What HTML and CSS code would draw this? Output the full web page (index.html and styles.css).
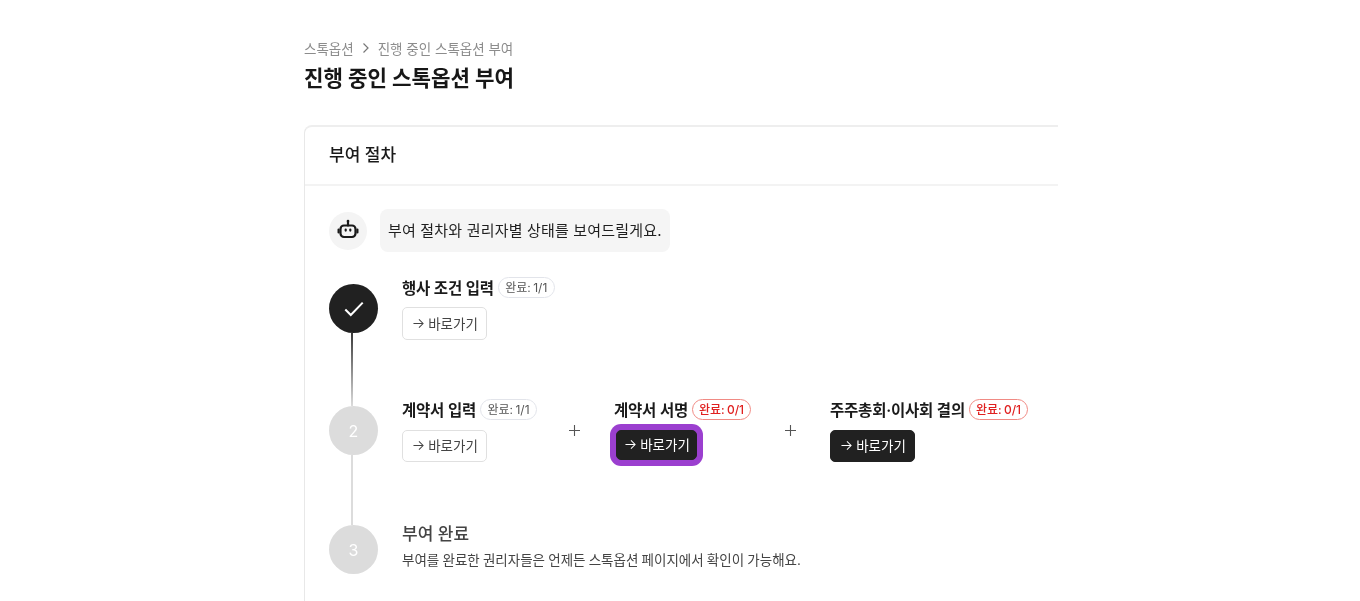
FILE: index.html
```html
<!DOCTYPE html>
<html lang="ko">
<head>
    <meta charset="UTF-8">
    <meta name="viewport" content="width=device-width, initial-scale=1.0">
    <title>진행 중인 스톡옵션 부여</title>
    <link rel="stylesheet" href="styles.css">
</head>
<body>
    <main class="page">
        <nav class="breadcrumb">
            <span>스톡옵션</span>
            <svg class="breadcrumb-sep" viewBox="0 0 12 12"><path d="M3.5 1.5 8 6l-4.5 4.5"/></svg>
            <span>진행 중인 스톡옵션 부여</span>
        </nav>
        <h1 class="page-title">진행 중인 스톡옵션 부여</h1>

        <section class="card">
            <h2 class="card-title">부여 절차</h2>
            <div class="card-body">
                <div class="bot-row">
                    <div class="bot-avatar">
                        <svg viewBox="0 0 22 22" class="bot-icon">
                            <circle cx="11" cy="2" r="1.3" class="bot-dot"/>
                            <path d="M11 2.5v4"/>
                            <rect x="3.5" y="6.5" width="15" height="11.5" rx="3.5"/>
                            <path d="M1.6 10.5v3M20.4 10.5v3"/>
                            <path d="M8.7 10.6v1M13.3 10.6v1"/>
                        </svg>
                    </div>
                    <p class="bot-message">부여 절차와 권리자별 상태를 보여드릴게요.</p>
                </div>

                <div class="step step-one">
                    <div class="rail">
                        <div class="step-circle done">
                            <svg viewBox="0 0 24 24" class="check"><path d="M2.5 12.5 8.5 18.5 21.5 5"/></svg>
                        </div>
                        <div class="rail-line rail-fade"></div>
                    </div>
                    <div class="step-tasks">
                        <div class="task">
                            <div class="task-head"><strong>행사 조건 입력</strong><span class="badge">완료: 1/1</span></div>
                            <button class="go-btn"><svg viewBox="0 0 12 12" class="arrow"><path d="M.5 6h10.5M6.5 1.5 11 6l-4.5 4.5"/></svg>바로가기</button>
                        </div>
                    </div>
                </div>

                <div class="step step-two">
                    <div class="rail">
                        <div class="step-circle">2</div>
                        <div class="rail-line"></div>
                    </div>
                    <div class="step-tasks">
                        <div class="task task-first">
                            <div class="task-head"><strong>계약서 입력</strong><span class="badge">완료: 1/1</span></div>
                            <button class="go-btn"><svg viewBox="0 0 12 12" class="arrow"><path d="M.5 6h10.5M6.5 1.5 11 6l-4.5 4.5"/></svg>바로가기</button>
                        </div>
                        <svg viewBox="0 0 11 11" class="plus"><path d="M5.5 0v11M0 5.5h11"/></svg>
                        <div class="task task-second">
                            <div class="task-head"><strong>계약서 서명</strong><span class="badge badge-red">완료: 0/1</span></div>
                            <button class="go-btn go-dark go-focus"><svg viewBox="0 0 12 12" class="arrow"><path d="M.5 6h10.5M6.5 1.5 11 6l-4.5 4.5"/></svg>바로가기</button>
                        </div>
                        <svg viewBox="0 0 11 11" class="plus"><path d="M5.5 0v11M0 5.5h11"/></svg>
                        <div class="task">
                            <div class="task-head"><strong>주주총회·이사회 결의</strong><span class="badge badge-red">완료: 0/1</span></div>
                            <button class="go-btn go-dark"><svg viewBox="0 0 12 12" class="arrow"><path d="M.5 6h10.5M6.5 1.5 11 6l-4.5 4.5"/></svg>바로가기</button>
                        </div>
                    </div>
                </div>

                <div class="step step-three">
                    <div class="rail">
                        <div class="step-circle">3</div>
                    </div>
                    <div class="step-final">
                        <h3>부여 완료</h3>
                        <p>부여를 완료한 권리자들은 언제든 스톡옵션 페이지에서 확인이 가능해요.</p>
                    </div>
                </div>
            </div>
        </section>
    </main>
</body>
</html>
```

FILE: styles.css
```css
html, body {
    height: 100%;
}

body {
    margin: 0;
    background-color: #fff;
    color: #1a1a1a;
    font-family: Inter, "Noto Sans CJK KR", sans-serif;
    overflow: hidden;
}

.page {
    width: 754px;
    height: 601px;
    margin-left: 304px;
    padding-top: 38px;
    box-sizing: border-box;
    overflow: hidden;
    will-change: transform;
}

.breadcrumb {
    display: flex;
    align-items: center;
    gap: 6px;
    height: 19px;
    font-size: 13.5px;
    color: #8c8c8c;
}

.breadcrumb-sep {
    width: 12px;
    height: 12px;
    fill: none;
    stroke: #777;
    stroke-width: 1.2;
}

.page-title {
    margin: 8px 0 0;
    font-size: 21.2px;
    line-height: 26px;
    font-weight: 700;
    color: #171717;
}

.card {
    width: 900px;
    min-height: 480px;
    margin-top: 34px;
    border-top: 2px solid #eeeeee;
    border-left: 1px solid #e8e8e8;
    border-radius: 8px 0 0 0;
    box-sizing: border-box;
}

.card-title {
    margin: 0;
    padding: 0 0 0 24px;
    height: 59px;
    line-height: 57px;
    font-size: 17px;
    font-weight: 500;
    color: #1a1a1a;
    border-bottom: 2px solid #f3f3f3;
    box-sizing: border-box;
}

.card-body {
    padding: 23px 0 0 24px;
}

.bot-row {
    display: flex;
    align-items: center;
    gap: 13px;
}

.bot-avatar {
    width: 38px;
    height: 38px;
    border-radius: 50%;
    background-color: #f4f4f4;
    display: flex;
    align-items: center;
    justify-content: center;
}

.bot-icon {
    width: 22px;
    height: 22px;
    margin-bottom: 2px;
    fill: none;
    stroke: #1a1a1a;
    stroke-width: 2.2;
    stroke-linecap: round;
}

.bot-dot {
    fill: #1a1a1a;
    stroke: none;
}

.bot-message {
    margin: 0;
    padding: 0 8px;
    height: 43px;
    line-height: 43px;
    font-size: 15px;
    letter-spacing: 0.18px;
    color: #1f1f1f;
    background-color: #f5f5f5;
    border-radius: 8px;
}

.step {
    display: flex;
    gap: 24px;
}

.step-one {
    margin-top: 32px;
    height: 122px;
}

.step-two {
    height: 119px;
}

.rail {
    width: 49px;
    flex: none;
    display: flex;
    flex-direction: column;
    align-items: center;
}

.step-circle {
    width: 49px;
    height: 49px;
    flex: none;
    border-radius: 50%;
    background-color: #dcdcdc;
    color: #fff;
    font-size: 16px;
    display: flex;
    align-items: center;
    justify-content: center;
}

.step-circle.done {
    background-color: #212121;
}

.check {
    width: 22px;
    height: 22px;
    fill: none;
    stroke: #fff;
    stroke-width: 2.2;
}

.rail-line {
    width: 2px;
    flex: 1;
    margin-right: 3px;
    background-color: #dcdcdc;
}

.rail-fade {
    background: linear-gradient(#3a3a3a, #dcdcdc);
}

.step-tasks {
    display: flex;
    align-items: flex-start;
    margin-top: -7px;
}

.task-first {
    width: 167px;
}

.task-second {
    width: 171px;
}

.task-head {
    display: flex;
    align-items: center;
    gap: 4px;
    height: 21px;
    white-space: nowrap;
}

.task-head strong {
    margin-bottom: 2px;
    font-size: 15.5px;
    font-weight: 600;
    letter-spacing: -0.2px;
    color: #1a1a1a;
}

.badge {
    height: 19px;
    padding: 0 6.5px;
    line-height: 19px;
    font-size: 12px;
    word-spacing: -1px;
    color: #555;
    border: 1px solid #e2e4ea;
    border-radius: 11px;
}

.badge-red {
    padding: 0 6px;
    font-weight: 500;
    color: #e02020;
    border-color: #f08a84;
}

.go-btn {
    display: flex;
    align-items: center;
    gap: 4px;
    width: 85px;
    height: 33px;
    margin-top: 9px;
    padding: 0 0 1px 2px;
    justify-content: center;
    background-color: #fff;
    border: 1px solid #e0e0e0;
    border-radius: 5px;
    color: #444;
    font-family: inherit;
    font-size: 13.5px;
}

.step-two .go-btn {
    height: 32px;
    margin-top: 10px;
    padding-bottom: 2px;
}

.arrow {
    width: 11px;
    height: 11px;
    fill: none;
    stroke: currentColor;
    stroke-width: 1.1;
}

.go-dark {
    background-color: #212121;
    border-color: #212121;
    color: #fff;
}

.step-two .go-focus {
    width: 81px;
    height: 30px;
    margin: 10px 0 0 2px;
    box-shadow: 0 0 0 6px #9b3fcf;
}

.plus {
    width: 11px;
    height: 11px;
    flex: none;
    margin: 26px 34px 0 0;
    fill: none;
    stroke: #555;
    stroke-width: 1.1;
}

.step-final {
    margin-top: -1px;
}

.step-final h3 {
    margin: 0;
    font-size: 17px;
    line-height: 20px;
    font-weight: 500;
    color: #444;
}

.step-final p {
    margin: 6px 0 0;
    font-size: 13.5px;
    line-height: 20px;
    word-spacing: -0.6px;
    color: #444;
}
```
